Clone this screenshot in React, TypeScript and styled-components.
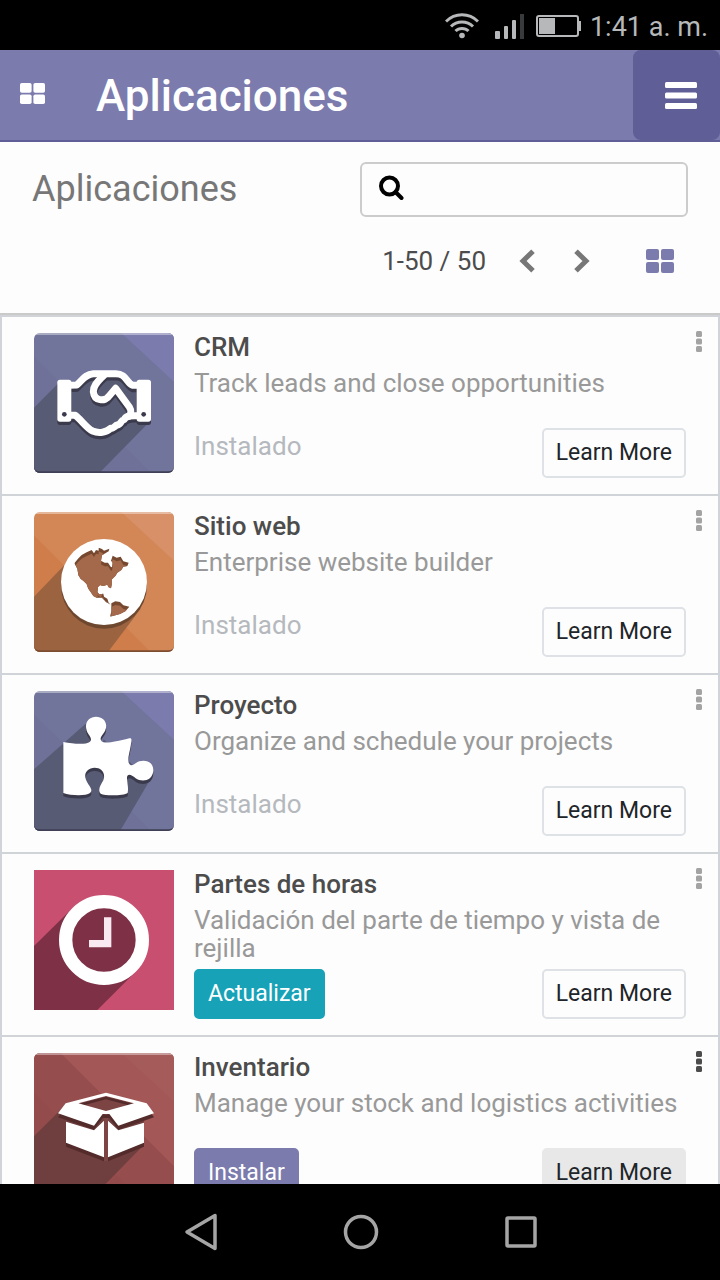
import React from "react";
import styled, { createGlobalStyle } from "styled-components";

const GlobalStyle = createGlobalStyle`
  *, *::before, *::after { box-sizing: border-box; }
  body {
    margin: 0;
    background: #fdfdfd;
    font-family: Roboto, "Liberation Sans", sans-serif;
    color: #4c4c4c;
  }
  button, input { font-family: inherit; margin: 0; }
  h1, h2, h3, p { margin: 0; }
  svg { display: block; flex: none; }
`;

const Screen = styled.div`
  height: 100vh;
  display: flex;
  flex-direction: column;
  overflow: hidden;
`;

const StatusBar = styled.div`
  flex: none;
  height: 50px;
  padding: 2px 12px 0 0;
  background: #000;
  color: #b6b8b9;
  display: flex;
  align-items: center;
  justify-content: flex-end;
  font-size: 27px;
  line-height: 32px;
`;

const StatusIcon = styled.span<{ $gap: number }>`
  margin-right: ${(p) => p.$gap}px;
`;

const Clock = styled.time`
  padding-top: 2px;
`;

const NavBar = styled.header`
  flex: none;
  height: 92px;
  background: #7c7bad;
  border-bottom: 2px solid #5f5e97;
  display: flex;
  align-items: stretch;
  color: #fff;
`;

const AppsButton = styled.button`
  width: 64px;
  padding: 0 0 4px;
  border: 0;
  background: none;
  color: inherit;
  display: flex;
  align-items: center;
  justify-content: center;
`;

const Brand = styled.h1`
  flex: 1;
  padding-left: 32px;
  font-size: 44px;
  line-height: 92px;
  font-weight: 500;
`;

const MenuButton = styled.button`
  width: 87px;
  border: 0;
  border-radius: 8px;
  background: #5f5e97;
  color: inherit;
  padding: 0 0 0 8px;
  display: flex;
  align-items: center;
  justify-content: center;
`;

const ControlPanel = styled.section`
  flex: none;
  padding: 20px 32px 32px;
  border-bottom: 2px solid #cacaca;
  display: flex;
  flex-direction: column;
  gap: 24px;
`;

const PanelRow = styled.div`
  display: grid;
  grid-template-columns: minmax(0, 1fr) minmax(0, 1fr);
  align-items: center;
`;

const Breadcrumb = styled.h2`
  padding-bottom: 2px;
  font-size: 36px;
  line-height: 40px;
  font-weight: 400;
  color: #777;
`;

const SearchBox = styled.label`
  height: 55px;
  padding: 0 16px 4px;
  border: 2px solid #ccc;
  border-radius: 6px;
  display: flex;
  align-items: center;
  gap: 12px;
  color: #000;
`;

const SearchInput = styled.input`
  flex: 1;
  min-width: 0;
  border: 0;
  outline: 0;
  background: transparent;
  font-size: 26px;
`;

const Pager = styled.nav`
  height: 40px;
  display: flex;
  align-items: center;
  justify-content: flex-end;
  color: #777;
`;

const PagerText = styled.span`
  margin-right: 13px;
  font-size: 26px;
  line-height: 28px;
  color: #4c4c4c;
`;

const PagerButton = styled.button`
  width: 55px;
  height: 40px;
  padding: 0;
  border: 0;
  background: none;
  color: inherit;
  display: flex;
  align-items: center;
  justify-content: center;
`;

const ViewButton = styled(PagerButton)`
  width: 57px;
  margin-left: 22px;
  color: #7c7bad;
`;

const AppList = styled.main`
  flex: 1;
  min-height: 0;
  overflow: hidden;
  border: solid #d0d3d8;
  border-width: 2px 2px 0;
`;

const Card = styled.article`
  display: grid;
  grid-template-columns: 140px minmax(0, 1fr) 32px;
  padding: 16px 0 16px 32px;
  border-bottom: 2px solid #d0d3d8;
`;

const CardBody = styled.div`
  min-height: 145px;
  padding-left: 20px;
  display: flex;
  flex-direction: column;
`;

const CardTitle = styled.h3`
  margin-bottom: 8px;
  font-size: 26px;
  line-height: 28px;
  font-weight: 500;
  color: #4c4c4c;
`;

const Summary = styled.p`
  margin-bottom: 7px;
  font-size: 26px;
  line-height: 28px;
  color: #999;
`;

const Actions = styled.div`
  margin-top: auto;
  display: flex;
  justify-content: space-between;
`;

const Installed = styled.span`
  font-size: 26px;
  line-height: 36px;
  color: #b5b9be;
`;

const variants = {
  outline: ["#fdfdfd", "#dee2e6", "#212529"],
  muted: ["#e8e8e8", "#e8e8e8", "#212529"],
  primary: ["#7c7bad", "#7c7bad", "#fff"],
  info: ["#17a2b8", "#17a2b8", "#fff"],
} as const;

type Variant = keyof typeof variants;

const Button = styled.button<{ $variant: Variant }>`
  height: 50px;
  padding: 0 12px;
  border: 2px solid ${(p) => variants[p.$variant][1]};
  border-radius: 5px;
  background: ${(p) => variants[p.$variant][0]};
  color: ${(p) => variants[p.$variant][2]};
  font-size: 23px;
  line-height: 28px;
`;

const MoreButton = styled.button<{ $dark?: boolean }>`
  height: 28px;
  padding: 0 6px 10px 0;
  border: 0;
  background: none;
  color: ${(p) => (p.$dark ? "#4c4c4c" : "#a3a3a3")};
  display: flex;
  align-items: center;
  justify-content: center;
`;

const SystemBar = styled.nav`
  flex: none;
  height: 96px;
  padding-left: 2px;
  background: #000;
  display: flex;
  justify-content: center;
`;

const SystemButton = styled.button`
  width: 160px;
  padding: 0;
  border: 0;
  background: none;
  display: flex;
  align-items: center;
  justify-content: center;
`;

const WifiIcon = () => (
  <svg width="34" height="26" viewBox="0 0 34 26" fill="none" stroke="#b6b8b9" strokeWidth="3">
    <path d="M1 8.5C10-.5 24-.5 33 8.5" />
    <path d="M6 13.5C12 7.500 22 7.500 28 13.500" />
    <path d="M10.500 18C14 14.500 20 14.500 23.500 18" />
    <circle cx="17" cy="22.500" r="2.800" fill="#b6b8b9" stroke="none" />
  </svg>
);

const SignalIcon = () => (
  <svg width="29" height="25" viewBox="0 0 29 25" fill="#b6b8b9">
    <rect y="17" width="5" height="8" rx="1" />
    <rect x="9" y="12" width="4" height="13" rx="1" />
    <rect x="17" y="6" width="4" height="19" rx="1" />
    <rect x="25" width="4" height="25" fill="#383a3b" />
  </svg>
);

const BatteryIcon = () => (
  <svg width="45" height="22" viewBox="0 0 45 22">
    <rect x="1" y="1" width="41" height="20" rx="2" fill="none" stroke="#b6b8b9" strokeWidth="2" />
    <rect x="3" y="3" width="16" height="16" fill="#b6b8b9" />
    <rect x="42" y="6" width="3" height="10" fill="#b6b8b9" />
  </svg>
);

const TilesIcon = ({ width, height }: { width: number; height: number }) => (
  <svg width={width} height={height} viewBox="0 0 28 24" preserveAspectRatio="none" fill="currentColor">
    <rect width="13" height="11" rx="2" />
    <rect x="15" width="13" height="11" rx="2" />
    <rect y="13" width="13" height="11" rx="2" />
    <rect x="15" y="13" width="13" height="11" rx="2" />
  </svg>
);

const BarsIcon = () => (
  <svg width="32" height="27" viewBox="0 0 32 27" fill="currentColor">
    <rect width="32" height="6" rx="1.500" />
    <rect y="10.500" width="32" height="6" rx="1.500" />
    <rect y="21" width="32" height="6" rx="1.500" />
  </svg>
);

const SearchIcon = () => (
  <svg width="26" height="26" viewBox="0 0 26 26" fill="none" stroke="currentColor" strokeWidth="4">
    <circle cx="11.500" cy="11" r="8.500" />
    <path d="M17.500 17L23.500 23" strokeLinecap="round" />
  </svg>
);

const Chevron = ({ flip }: { flip?: boolean }) => (
  <svg width="16" height="24" viewBox="0 0 16 24" fill="none" stroke="currentColor" strokeWidth="5">
    <path d={flip ? "M2 2.200L12 12L2 21.800" : "M14 2.200L4 12L14 21.800"} />
  </svg>
);

const DotsIcon = () => (
  <svg width="6" height="22" viewBox="0 0 6 22" fill="currentColor">
    <rect width="6" height="6" rx="1.500" />
    <rect y="7.500" width="6" height="6" rx="1.500" />
    <rect y="15" width="6" height="6" rx="1.500" />
  </svg>
);

interface TileProps {
  id: string;
  base: string;
  light: string;
  low: string;
  edge: string;
  children: React.ReactNode;
}

/* Rounded app tile with diagonal shading, a lit top edge and a dark bottom edge. */
const Tile = ({ id, base, light, low, edge, children }: TileProps) => (
  <svg width="140" height="140" viewBox="0 0 420 420" aria-hidden="true">
    <clipPath id={id}>
      <rect width="420" height="420" rx="18" />
    </clipPath>
    <g clipPath={`url(#${id})`}>
      <rect width="420" height="420" fill={base} />
      <path d="M262 0H420V146Z" fill={light} />
      <path d="M0 70L350 420H0Z" fill={low} />
      {children}
      <rect width="420" height="6" fill="#fff" opacity=".4" />
      <path d="M0 402Q2 415 18 415H402Q418 415 420 402V420H0Z" fill={edge} />
    </g>
  </svg>
);

const handLines = (
  <>
    <path d="M104 157L128 156C145 142 152 124 178 122H246C276 122 278 150 296 157H316" />
    <path d="M212 124C196 142 178 154 178 176C180 204 214 208 226 188L245 166L286 222C294 234 292 248 280 252" />
    <path d="M104 247H124C142 260 156 284 176 294C194 302 218 298 230 286C238 288 242 278 250 276C262 274 260 262 270 260C278 246 288 248 316 248" />
  </>
);

const cuffs = (
  <>
    <rect x="70" y="140" width="42" height="126" rx="8" />
    <rect x="308" y="140" width="43" height="126" rx="8" />
  </>
);

const CrmIcon = () => (
  <Tile id="tile-crm" base="#71749b" light="#7c7bad" low="#6f7198" edge="#3f4055">
    <path d="M0 224L74 150H120L178 122H246L300 157H320V268H345L196 420H0Z" fill="#585b74" />
    <g transform="translate(0 10)" fill="#3b3a4c">
      {cuffs}
      <g fill="none" stroke="#3b3a4c" strokeWidth="21">{handLines}</g>
    </g>
    <g fill="none" stroke="#fff" strokeWidth="21" strokeLinejoin="round">{handLines}</g>
    <g fill="#fff">{cuffs}</g>
    <circle cx="91" cy="244" r="7" fill="#3b3a4c" />
    <circle cx="329" cy="244" r="7" fill="#3b3a4c" />
  </Tile>
);

const northAmerica =
  "M121 154L132 140L143 129L158 121L173 114L180 124L186 114L194 116L194 107L204 111L210 116L226 110L224 118L214 124L204 130L201 146L212 152L222 152L230 164L234 166L236 152L231 146L236 131L248 137L260 134L268 148L284 152L280 162L268 164L262 174L250 182L244 192L234 202L234 214L231 229L224 226L220 218L208 222L198 219L192 225L190 240L196 247L208 245L210 254L220 260L224 272L230 278L216 270L204 257L188 257L178 252L170 240L163 230L158 216L148 206L140 200L133 189L130 170Z";
const southAmerica = "M232 274L244 268L258 270L268 280L286 284L274 298L258 306L228 314L232 298Z";

const WebsiteIcon = () => (
  <Tile id="tile-web" base="#d38757" light="#d89068" low="#cf7d4b" edge="#7d4d31">
    <path d="M0 254L100 150L320 290L222 420H0Z" fill="#9b6340" />
    <circle cx="210" cy="221" r="129" fill="#6e472f" />
    <circle cx="210" cy="210" r="129" fill="#fff" />
    <clipPath id="land">
      <path d={northAmerica} />
      <path d={southAmerica} />
    </clipPath>
    <g clipPath="url(#land)">
      <rect x="70" y="80" width="280" height="260" fill="#75482f" />
      <g transform="translate(0 11)" fill="#a4694a">
        <path d={northAmerica} />
        <path d={southAmerica} />
        <path d="M129 180L160 140L190 200L220 215L200 245L150 210Z" />
      </g>
    </g>
  </Tile>
);

const puzzle =
  "M88 153C120 159 155 162 168 152C176 144 166 135 160 124C148 95 165 77 186 77C208 77 224 95 213 120C206 132 195 140 202 150C212 160 240 153 286 142C292 141 293 144 292 150C290 175 280 200 284 215C290 228 298 222 306 216C322 204 358 206 358 238C356 272 322 274 305 262C290 248 278 248 279 262C280 280 284 290 281 306C270 314 215 316 200 308C190 296 200 282 208 268C216 245 202 230 182 230C160 230 148 248 156 266C162 282 180 296 168 306C155 316 110 314 88 306Z";

const ProjectIcon = () => (
  <Tile id="tile-project" base="#71749b" light="#7c7bad" low="#6f7198" edge="#3f4055">
    <path d="M0 235L155 98L290 215L343 275L258 420H0Z" fill="#585b74" />
    <path d="M160 100L220 110L206 155L292 141L284 222L360 238L340 278L200 200Z" fill="#71749b" />
    <path d={puzzle} transform="translate(0 10)" fill="#3b3a4c" />
    <path d={puzzle} fill="#fff" />
  </Tile>
);

const TimesheetIcon = () => (
  <svg width="140" height="140" viewBox="0 0 420 420" aria-hidden="true">
    <rect width="420" height="420" fill="#c84f70" />
    <path d="M0 228L115 115L305 305L190 420H0Z" fill="#7e3146" />
    <circle cx="210" cy="210" r="115" fill="#7e3146" stroke="#fff" strokeWidth="40" />
    <path d="M221 142V221H165" fill="none" stroke="#f8eaf0" strokeWidth="22" />
  </svg>
);

const boxShape = (
  <>
    <path d="M95 151L216 119L338 151L360 181L253 218L226 183H206L180 218L72 181ZM133 151L216 174L300 151L216 129Z" fillRule="evenodd" />
    <path d="M96 206L180 232L210 203V313L96 269Z" />
    <path d="M222 203L253 232L330 209V269L222 313Z" />
  </>
);

const InventoryIcon = () => (
  <Tile id="tile-inventory" base="#a35757" light="#a65b5b" low="#944b4b" edge="#4d2a2a">
    <path d="M0 0H80L420 340V420H300L0 120Z" fill="#964d4d" />
    <path d="M0 250L95 155L330 151V275L188 420H0Z" fill="#6f3e3e" />
    <path d="M133 151L216 129L300 151L216 174Z" fill="#7d4444" />
    <g transform="translate(0 12)" fill="#542b2b">{boxShape}</g>
    <path d="M152 156L216 139L280 156L216 174Z" fill="#7d4444" />
    <path d="M210 195H222V325H210Z" fill="#7d4444" />
    <g fill="#fff">{boxShape}</g>
  </Tile>
);

interface AppEntry {
  title: string;
  summary: string;
  icon: React.ReactNode;
  action?: { label: string; variant: Variant };
}

const apps: AppEntry[] = [
  { title: "CRM", summary: "Track leads and close opportunities", icon: <CrmIcon /> },
  { title: "Sitio web", summary: "Enterprise website builder", icon: <WebsiteIcon /> },
  { title: "Proyecto", summary: "Organize and schedule your projects", icon: <ProjectIcon /> },
  {
    title: "Partes de horas",
    summary: "Validación del parte de tiempo y vista de rejilla",
    icon: <TimesheetIcon />,
    action: { label: "Actualizar", variant: "info" },
  },
  {
    title: "Inventario",
    summary: "Manage your stock and logistics activities",
    icon: <InventoryIcon />,
    action: { label: "Instalar", variant: "primary" },
  },
];

const AppCard = ({ app }: { app: AppEntry }) => {
  const active = app.action?.variant === "primary";
  return (
    <Card>
      {app.icon}
      <CardBody>
        <CardTitle>{app.title}</CardTitle>
        <Summary>{app.summary}</Summary>
        <Actions>
          {app.action ? (
            <Button $variant={app.action.variant}>{app.action.label}</Button>
          ) : (
            <Installed>Instalado</Installed>
          )}
          <Button $variant={active ? "muted" : "outline"}>Learn More</Button>
        </Actions>
      </CardBody>
      <MoreButton $dark={active} aria-label={`Opciones de ${app.title}`}>
        <DotsIcon />
      </MoreButton>
    </Card>
  );
};

export default function App() {
  return (
    <Screen>
      <GlobalStyle />
      <StatusBar>
        <StatusIcon $gap={16}><WifiIcon /></StatusIcon>
        <StatusIcon $gap={12}><SignalIcon /></StatusIcon>
        <StatusIcon $gap={9}><BatteryIcon /></StatusIcon>
        <Clock>1:41 a. m.</Clock>
      </StatusBar>
      <NavBar>
        <AppsButton aria-label="Inicio"><TilesIcon width={25} height={21} /></AppsButton>
        <Brand>Aplicaciones</Brand>
        <MenuButton aria-label="Menú"><BarsIcon /></MenuButton>
      </NavBar>
      <ControlPanel>
        <PanelRow>
          <Breadcrumb>Aplicaciones</Breadcrumb>
          <SearchBox>
            <SearchIcon />
            <SearchInput type="text" aria-label="Buscar" />
          </SearchBox>
        </PanelRow>
        <Pager>
          <PagerText>1-50 / 50</PagerText>
          <PagerButton aria-label="Anterior"><Chevron /></PagerButton>
          <PagerButton aria-label="Siguiente"><Chevron flip /></PagerButton>
          <ViewButton aria-label="Vista kanban"><TilesIcon width={28} height={24} /></ViewButton>
        </Pager>
      </ControlPanel>
      <AppList>
        {apps.map((app) => (
          <AppCard key={app.title} app={app} />
        ))}
      </AppList>
      <SystemBar>
        <SystemButton aria-label="Atrás">
          <svg width="34" height="38" viewBox="0 0 34 38" fill="none" stroke="#a5a5a5" strokeWidth="3.500" strokeLinejoin="round">
            <path d="M31 2.500V35.500L3 19Z" />
          </svg>
        </SystemButton>
        <SystemButton aria-label="Pantalla de inicio">
          <svg width="36" height="36" viewBox="0 0 36 36" fill="none" stroke="#a5a5a5" strokeWidth="3.500">
            <circle cx="18" cy="18" r="15.500" />
          </svg>
        </SystemButton>
        <SystemButton aria-label="Recientes">
          <svg width="32" height="32" viewBox="0 0 32 32" fill="none" stroke="#a5a5a5" strokeWidth="3.500">
            <rect x="2" y="2" width="28" height="28" rx="1" />
          </svg>
        </SystemButton>
      </SystemBar>
    </Screen>
  );
}
